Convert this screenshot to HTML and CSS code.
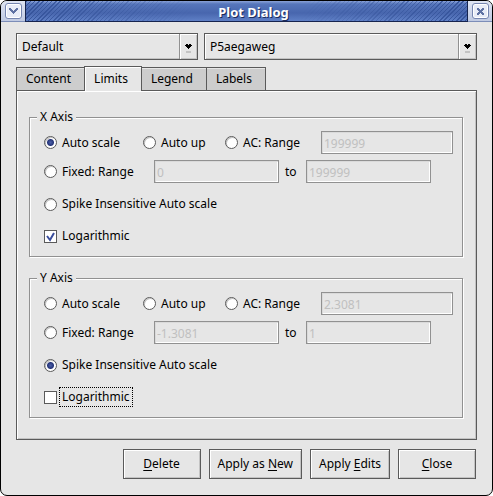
FILE: index.html
```html
<!DOCTYPE html>
<html lang="en">
<head>
  <meta charset="UTF-8">
  <meta name="viewport" content="width=device-width, initial-scale=1.0">
  <title>Plot Dialog</title>
  <link rel="stylesheet" href="styles.css">
</head>
<body>
  <div class="window">
    <header class="titlebar">
      <div class="corner corner-left">
        <button class="win-button" type="button" aria-label="Window menu">
          <svg width="9" height="6" viewBox="0 0 9 6" shape-rendering="crispEdges" fill="#5f72a3">
            <path d="M0 0h2v1h1v1h1v1h1v-1h1v-1h1v-1h2v2h-1v1h-1v1h-1v1h-1v1h-1v-1h-1v-1h-1v-1h-1v-1h-1z"/>
          </svg>
        </button>
      </div>
      <div class="caption">
        <h1>Plot Dialog</h1>
      </div>
      <div class="corner corner-right">
        <button class="win-button" type="button" aria-label="Close window">
          <svg width="7" height="7" viewBox="0 0 7 7" shape-rendering="crispEdges" fill="#5f72a3">
            <path d="M0 0h2v1h1v1h1v-1h1v-1h2v2h-1v1h-1v1h1v1h1v2h-2v-1h-1v-1h-1v1h-1v1h-2v-2h1v-1h1v-1h-1v-1h-1z"/>
          </svg>
        </button>
      </div>
    </header>

    <main class="content">
      <div class="combos">
        <div class="combo">
          <select aria-label="Plot type"><option>Default</option></select>
          <span class="arrow">
            <svg width="7" height="9" viewBox="0 0 7 9" shape-rendering="crispEdges">
              <path d="M1 0h2v1h1v-1h2v1h1v1h-1v1h-1v1h-1v1h-1v-1h-1v-1h-1v-1h-1v-1h1z"/>
              <path d="M1 7h5v2h-5z" fill="#c3c3c3"/>
            </svg>
          </span>
        </div>
        <div class="combo">
          <select aria-label="Plot name"><option>P5aegaweg</option></select>
          <span class="arrow">
            <svg width="7" height="9" viewBox="0 0 7 9" shape-rendering="crispEdges">
              <path d="M1 0h2v1h1v-1h2v1h1v1h-1v1h-1v1h-1v1h-1v-1h-1v-1h-1v-1h-1v-1h1z"/>
              <path d="M1 7h5v2h-5z" fill="#c3c3c3"/>
            </svg>
          </span>
        </div>
      </div>

      <div class="tabs" role="tablist">
        <button class="tab" type="button" role="tab">Content</button>
        <button class="tab active" type="button" role="tab" aria-selected="true">Limits</button>
        <button class="tab" type="button" role="tab">Legend</button>
        <button class="tab" type="button" role="tab">Labels</button>
      </div>

      <div class="panel" role="tabpanel">
        <fieldset class="axis">
          <legend>X Axis</legend>
          <div class="row row-scale">
            <label class="option"><input type="radio" name="x-scale" checked><span>Auto scale</span></label>
            <label class="option"><input type="radio" name="x-scale"><span>Auto up</span></label>
            <label class="option"><input type="radio" name="x-scale"><span>AC: Range</span></label>
            <input class="field" type="text" value="199999" aria-label="X AC range" disabled>
          </div>
          <div class="row row-fixed">
            <label class="option"><input type="radio" name="x-scale"><span>Fixed: Range</span></label>
            <input class="field" type="text" value="0" aria-label="X range from" disabled>
            <label class="to" for="x-to">to</label>
            <input class="field" id="x-to" type="text" value="199999" disabled>
          </div>
          <div class="row">
            <label class="option"><input type="radio" name="x-scale"><span>Spike Insensitive Auto scale</span></label>
          </div>
          <div class="row">
            <label class="option"><input type="checkbox" checked><span>Logarithmic</span></label>
          </div>
        </fieldset>

        <fieldset class="axis">
          <legend>Y Axis</legend>
          <div class="row row-scale">
            <label class="option"><input type="radio" name="y-scale"><span>Auto scale</span></label>
            <label class="option"><input type="radio" name="y-scale"><span>Auto up</span></label>
            <label class="option"><input type="radio" name="y-scale"><span>AC: Range</span></label>
            <input class="field" type="text" value="2.3081" aria-label="Y AC range" disabled>
          </div>
          <div class="row row-fixed">
            <label class="option"><input type="radio" name="y-scale"><span>Fixed: Range</span></label>
            <input class="field" type="text" value="-1.3081" aria-label="Y range from" disabled>
            <label class="to" for="y-to">to</label>
            <input class="field" id="y-to" type="text" value="1" disabled>
          </div>
          <div class="row">
            <label class="option"><input type="radio" name="y-scale" checked><span>Spike Insensitive Auto scale</span></label>
          </div>
          <div class="row">
            <label class="option focused"><input type="checkbox"><span>Logarithmic</span></label>
          </div>
        </fieldset>
      </div>

      <div class="actions">
        <button class="action" type="button"><u>D</u>elete</button>
        <button class="action" type="button">Apply as <u>N</u>ew</button>
        <button class="action" type="button">Apply <u>E</u>dits</button>
        <button class="action" type="button"><u>C</u>lose</button>
      </div>
    </main>
  </div>
</body>
</html>
```

FILE: styles.css
```css
* {
  margin: 0;
  padding: 0;
  box-sizing: border-box;
}

body {
  background-color: #fff;
  color: #000;
  font-family: "Noto Sans", sans-serif;
  font-size: 12px;
  line-height: 16px;
}

button, input, select {
  font: inherit;
  color: inherit;
}

.window {
  min-height: 100vh;
  background-color: #e6e6e6;
  border: 1px solid #000;
  border-radius: 7px;
  overflow: hidden;
}

/* Title bar */
.titlebar {
  display: flex;
  height: 21px;
}

.corner {
  display: flex;
  justify-content: center;
  align-items: center;
  width: 24px;
  background: linear-gradient(#dfe5f3, #c0cae2);
  border-bottom: 1px solid #7c8db8;
}

.win-button {
  display: flex;
  justify-content: center;
  align-items: center;
  width: 17px;
  height: 16px;
  background-color: #e8ecf7;
  border: 1px solid #7585b0;
  border-radius: 3px;
  box-shadow: inset 0 0 0 1px #fff;
}

.caption {
  flex: 1;
  display: grid;
  place-items: center;
  background: linear-gradient(#8ba3d8, #5676bb 3px, #4866ae 12px, #5f80c6);
  border: solid #16244f;
  border-width: 0 1px 1px;
}

.caption::before {
  content: "";
  grid-area: 1 / 1;
  width: 100%;
  height: 100%;
  background: repeating-linear-gradient(135deg, #36549b 0 1px, transparent 1px 3px);
  mask-image: linear-gradient(90deg, #000, transparent 38%, transparent 62%, #000);
}

.caption h1 {
  grid-area: 1 / 1;
  padding: 2px 0 0 14px;
  color: #fff;
  font-size: 13px;
  font-weight: bold;
  text-shadow: 1px 1px 0 #1c2c5c;
}

.content {
  padding: 11px 15px 16px;
}

/* Drop-downs */
.combos {
  display: grid;
  grid-template-columns: 2fr 3fr;
  gap: 6px;
}

.combo {
  display: grid;
  grid-template-columns: 1fr 18px;
  height: 27px;
  border: 1px solid #5a5a5a;
  box-shadow: inset 1px 1px 0 #fff, inset -1px -1px 0 #c3c3c3;
}

.combo select {
  grid-area: 1 / 1 / 2 / 3;
  appearance: none;
  padding-left: 5px;
  background: transparent;
  border: none;
}

.arrow {
  grid-area: 1 / 2;
  display: flex;
  justify-content: center;
  padding-top: 10px;
  border-left: 1px solid #919191;
  box-shadow: inset 1px 1px 0 #fff;
  pointer-events: none;
}

/* Tabs */
.tabs {
  display: flex;
  align-items: flex-end;
  margin-top: 6px;
}

.tab {
  height: 23px;
  padding: 0 13px 0 9px;
  margin-right: -1px;
  background-color: #cdcdcd;
  border: 1px solid #5a5a5a;
  border-bottom: none;
  box-shadow: inset 0 1px 0 #e6e6e6;
}

.tab.active {
  position: relative;
  height: 25px;
  margin-bottom: -1px;
  padding-bottom: 1px;
  background-color: #e6e6e6;
  box-shadow: inset 1px 1px 0 #fff;
}

.panel {
  display: grid;
  gap: 13px;
  padding: 18px 13px 21px 12px;
  border: 1px solid #5a5a5a;
  box-shadow: inset 1px 1px 0 #fff, inset -1px -1px 0 #c3c3c3;
}

/* Axis groups */
.axis {
  padding: 6px 9px 4px 14px;
  border: 1px solid #919191;
  box-shadow: inset 1px 1px 0 #fff, 1px 1px 0 #fff;
}

.axis legend {
  margin-left: -7px;
  padding: 0 3px;
  background-color: #e6e6e6;
}

.row {
  display: grid;
  align-items: center;
  height: 32px;
}

.row-scale {
  grid-template-columns: 99px 82px 96px 1fr;
  height: 23px;
}

.row-fixed {
  grid-template-columns: 110px 1fr 27px 1fr;
  height: 23px;
  margin: 6px 22px 5px 0;
}

.option {
  display: flex;
  align-items: center;
  gap: 3px;
}

.option span {
  padding: 1px 2px;
  white-space: nowrap;
}

.option.focused span {
  outline: 1px dotted #000;
}

.option input {
  appearance: none;
  flex: none;
  width: 13px;
  height: 13px;
  background-color: #fff;
  border: 1px solid #5a5a5a;
}

.option input[type="radio"] {
  border-radius: 50%;
  box-shadow: inset 1px 1px 0 #c3c3c3;
}

.option input[type="radio"]:checked {
  background-image: radial-gradient(circle at 50% 50%, #4b5fa8 0, #27367a 3px, transparent 4px);
}

.option input[type="checkbox"]:checked {
  background: #fff url("data:image/svg+xml,%3Csvg xmlns='http://www.w3.org/2000/svg' viewBox='0 0 11 11'%3E%3Cpath d='M2 5l3 4L9 2' fill='none' stroke='%23384c9c' stroke-width='2'/%3E%3C/svg%3E");
}

.field {
  width: 100%;
  min-width: 0;
  height: 23px;
  padding: 2px 2px 0;
  background-color: #e6e6e6;
  border: 1px solid #919191;
  box-shadow: inset 1px 1px 0 #dadada, inset -1px -1px 0 #fff;
}

.field:disabled {
  color: #c0c0c0;
}

.to {
  padding-left: 6px;
}

/* Bottom buttons */
.actions {
  display: flex;
  justify-content: flex-end;
  gap: 8px;
  margin: 9px 1px 0 0;
}

.action {
  min-width: 78px;
  height: 30px;
  padding: 0 8px;
  background-color: #e6e6e6;
  border: 1px solid #5a5a5a;
  box-shadow: inset 1px 1px 0 #fff, inset -1px -1px 0 #c3c3c3;
}

.action u {
  text-underline-offset: 2px;
}
```
